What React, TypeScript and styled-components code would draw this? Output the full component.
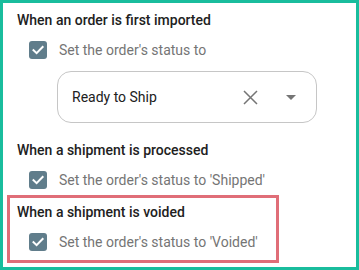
import React from "react"
import styled, { createGlobalStyle } from "styled-components"

const GlobalStyle = createGlobalStyle`
  html, body {
    margin: 0;
    padding: 0;
    background: #ffffff;
  }
  body {
    font-family: Roboto, "Liberation Sans", Arial, sans-serif;
  }
`

const Frame = styled.div`
  width: 359px;
  height: 270px;
  box-sizing: border-box;
  border: 3px solid #19bd9d;
  padding: 3px 0 0 7px;
  background: #ffffff;
  overflow: hidden;
  display: flex;
  flex-direction: column;
`

const Section = styled.section<{ $highlight?: boolean; $last?: boolean }>`
  display: flex;
  flex-direction: column;
  gap: 11px;
  padding: 4px 7px ${({ $last }) => ($last ? "9px" : "8px")};
  width: ${({ $highlight }) => ($highlight ? "266px" : "auto")};
  box-sizing: border-box;
  margin-top: ${({ $highlight }) => ($highlight ? "1px" : "0")};
  outline: ${({ $highlight }) => ($highlight ? "3px solid #e06e78" : "none")};
`

const Heading = styled.h3`
  margin: 0;
  font-size: 14px;
  line-height: 20px;
  font-weight: 500;
  color: #212121;
  white-space: nowrap;
`

const CheckRow = styled.label`
  display: flex;
  align-items: center;
  gap: 12px;
  padding-left: 12px;
  height: 18px;
  font-size: 14px;
  color: #757575;
  white-space: nowrap;
`

const Box = styled.span`
  width: 18px;
  height: 18px;
  border-radius: 3px;
  background: #607d8b;
  display: flex;
  align-items: center;
  justify-content: center;
  flex-shrink: 0;
`

const Select = styled.div`
  margin: 1px 0 5px 40px;
  width: 260px;
  height: 52px;
  box-sizing: border-box;
  border: 1px solid #c6c6c6;
  border-radius: 14px;
  display: flex;
  align-items: center;
  padding: 0 20px 0 14px;
  font-size: 14px;
  color: #212121;
`

const SelectValue = styled.span`
  flex: 1;
`

const IconSlot = styled.span<{ $gap?: number }>`
  display: flex;
  align-items: center;
  margin-left: ${({ $gap }) => $gap ?? 0}px;
`

function Checkbox() {
  return (
    <Box>
      <svg width="14" height="14" viewBox="0 0 14 14">
        <path d="M2.5 7.2 L5.6 10.2 L11.6 4" fill="none" stroke="#ffffff" strokeWidth="2" strokeLinecap="square" />
      </svg>
    </Box>
  )
}

export default function App() {
  return (
    <>
      <GlobalStyle />
      <Frame>
        <Section>
          <Heading>When an order is first imported</Heading>
          <CheckRow>
            <Checkbox />
            Set the order's status to
          </CheckRow>
          <Select>
            <SelectValue>Ready to Ship</SelectValue>
            <IconSlot>
              <svg width="15" height="15" viewBox="0 0 15 15">
                <path d="M1 1 L14 14 M14 1 L1 14" stroke="#757575" strokeWidth="1.5" />
              </svg>
            </IconSlot>
            <IconSlot $gap={28}>
              <svg width="10" height="5" viewBox="0 0 10 5">
                <path d="M0 0 L10 0 L5 5 Z" fill="#757575" />
              </svg>
            </IconSlot>
          </Select>
        </Section>
        <Section>
          <Heading>When a shipment is processed</Heading>
          <CheckRow>
            <Checkbox />
            Set the order's status to 'Shipped'
          </CheckRow>
        </Section>
        <Section $highlight $last>
          <Heading>When a shipment is voided</Heading>
          <CheckRow>
            <Checkbox />
            Set the order's status to 'Voided'
          </CheckRow>
        </Section>
      </Frame>
    </>
  )
}
